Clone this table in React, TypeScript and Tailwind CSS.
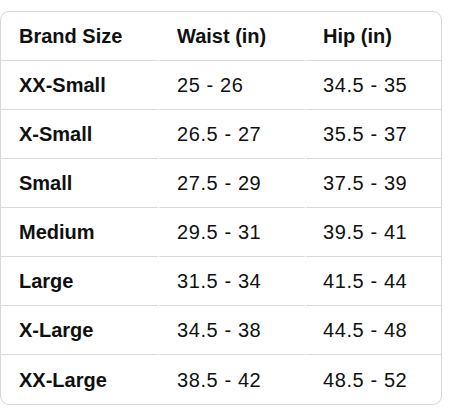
const rows: [string, string, string][] = [
  ["XX-Small", "25 - 26", "34.5 - 35"],
  ["X-Small", "26.5 - 27", "35.5 - 37"],
  ["Small", "27.5 - 29", "37.5 - 39"],
  ["Medium", "29.5 - 31", "39.5 - 41"],
  ["Large", "31.5 - 34", "41.5 - 44"],
  ["X-Large", "34.5 - 38", "44.5 - 48"],
  ["XX-Large", "38.5 - 42", "48.5 - 52"],
];

export default function App() {
  return (
    <div className="h-[415px] w-[460px] bg-white pt-[11px] font-['Liberation_Sans',Arial,sans-serif] text-[20px] text-[#0f1111]">
      <div className="w-[442px] overflow-hidden rounded-[9px] border border-[#d5d9d9]">
        {/* Header */}
        <div className="grid h-[49px] grid-cols-[157px_146px_137px] gap-x-px">
          <div className="flex items-center border-b border-[#d5d9d9] pl-[18px] font-bold">
            Brand Size
          </div>
          <div className="flex items-center border-b border-[#d5d9d9] pl-[18px] font-bold">
            Waist (in)
          </div>
          <div className="flex items-center border-b border-[#d5d9d9] pl-[17px] font-bold">
            Hip (in)
          </div>
        </div>

        {rows.map((r, i) => (
          <div
            key={r[0]}
            className="grid h-[49px] grid-cols-[157px_146px_137px] gap-x-px"
          >
            <div
              className={`flex items-center pl-[18px] font-bold ${i < rows.length - 1 ? "border-b border-[#d5d9d9]" : ""}`}
            >
              {r[0]}
            </div>
            <div
              className={`flex items-center pl-[18px] tracking-[0.6px] ${i < rows.length - 1 ? "border-b border-[#d5d9d9]" : ""}`}
            >
              {r[1]}
            </div>
            <div
              className={`flex items-center pl-[17px] tracking-[0.6px] ${i < rows.length - 1 ? "border-b border-[#d5d9d9]" : ""}`}
            >
              {r[2]}
            </div>
          </div>
        ))}
      </div>
    </div>
  );
}
